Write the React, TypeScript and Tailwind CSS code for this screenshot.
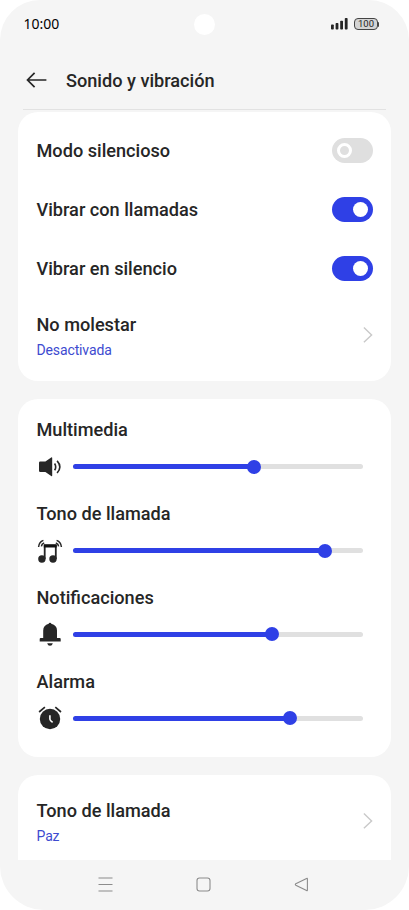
import type { ReactNode } from 'react';

type ToggleRowProps = {
  label: string;
  on: boolean;
};

type LinkRowProps = {
  label: string;
  value: string;
};

type SliderProps = {
  label: string;
  value: number;
  icon: ReactNode;
};

const SpeakerIcon = () => (
  <svg width="26" height="26" viewBox="0 0 26 26" fill="none">
    <path d="M3.2 7.6H8.4L14.2 3.4Q15.2 2.8 15.2 4V21.4Q15.2 22.6 14.2 22L8.4 18H3.2Q2 18 2 16.8V8.8Q2 7.6 3.2 7.6Z" fill="#262626" />
    <path d="M17.6 9.5Q19.8 12.9 17.6 16.3M20.1 6.9Q25.6 12.9 20.1 19" stroke="#262626" strokeWidth="1.6" />
  </svg>
);

const MusicIcon = () => (
  <svg width="26" height="26" viewBox="0 0 26 26" fill="none">
    <circle cx="4.9" cy="21" r="3.7" fill="#262626" />
    <circle cx="16" cy="21" r="3.7" fill="#262626" />
    <path d="M7.7 21V7.8H18.8V21" stroke="#262626" strokeWidth="1.8" />
    <path d="M6.8 6.2H19.7V9.5H6.8Z" fill="#111" />
    <path
      d="M1.6 9Q1.9 4 6.4 2.4M4.4 8.4Q4.6 5.9 7.2 4.9M24.4 9Q24.1 4 19.6 2.4M21.6 8.4Q21.4 5.9 18.8 4.9"
      stroke="#262626"
      strokeWidth="1.5"
    />
  </svg>
);

const BellIcon = () => (
  <svg width="26" height="26" viewBox="0 0 26 26" fill="#262626">
    <path d="M11.7 2.8Q11.8 1.7 13 1.7T14.3 2.8Q20 4.2 20 9.6V16.9H22.7Q23.7 16.9 23.7 17.9V20.5H2.7V17.9Q2.7 16.9 3.7 16.9H6.2V9.6Q6.2 4.2 11.7 2.8Z" />
    <path d="M10.2 22.3H15.8Q15.2 24.8 13 24.8T10.2 22.3Z" />
  </svg>
);

const AlarmIcon = () => (
  <svg width="26" height="26" viewBox="0 0 26 26" fill="none">
    <circle cx="13" cy="14" r="10.2" fill="#262626" />
    <path d="M2.1 7L7.9 2.2M18.3 2.2L24 7" stroke="#262626" strokeWidth="1.7" />
    <path d="M12.9 10.2V14.2Q13 15.4 15.6 17.4" stroke="#fff" strokeWidth="1.6" />
  </svg>
);

const Chevron = () => (
  <svg width="10" height="16" viewBox="0 0 10 16" fill="none" className="mb-[2px] shrink-0">
    <path d="M0.9 0.6L8.6 7.9L0.9 15.2" stroke="#c9c9c9" strokeWidth="1.4" />
  </svg>
);

const ToggleRow = ({ label, on }: ToggleRowProps) => (
  <div className="flex h-[59px] items-center justify-between">
    <p className="pt-px">{label}</p>
    <div
      className={
        on
          ? 'flex h-[25px] w-[41px] items-center justify-end rounded-full bg-[#2f40e6] px-[5px]'
          : 'flex h-[25px] w-[41px] items-center rounded-full bg-[#dfdfdf] px-[5px]'
      }
    >
      <span
        className={
          on
            ? 'size-[15px] rounded-full bg-white'
            : 'size-[15px] rounded-full border-[3px] border-white'
        }
      />
    </div>
  </div>
);

const LinkRow = ({ label, value }: LinkRowProps) => (
  <div className="flex items-center justify-between">
    <div>
      <p className="leading-7">{label}</p>
      <p className="text-[14px] leading-[22px] font-normal tracking-[-0.13px] text-[#3d4ad0]">{value}</p>
    </div>
    <Chevron />
  </div>
);

const VolumeSlider = ({ label, value, icon }: SliderProps) => (
  <div className="h-[83.85px]">
    <p className="leading-6">{label}</p>
    <div className="mt-[11.7px] flex h-[26px] items-center gap-[10px]">
      {icon}
      <div className="relative h-[4.6px] w-[290.5px] rounded-full bg-[#e0e0e0]">
        <div className="h-full rounded-full bg-[#2f40e6]" style={{ width: `${value}%` }} />
        <span
          className="absolute top-1/2 size-[14px] -translate-x-1/2 -translate-y-1/2 rounded-full bg-[#2f40e6]"
          style={{ left: `${value}%` }}
        />
      </div>
    </div>
  </div>
);

const App = () => {
  return (
    <div className="h-[910px] w-[409px] bg-white">
      <div className="flex h-full flex-col overflow-hidden rounded-t-[40px] rounded-b-[44px] bg-[#f5f5f5] font-['Roboto',sans-serif] text-[18.15px] font-medium text-[#262626]">
        <div className="grid h-12 grid-cols-3 items-center pr-[30px] pl-[23.5px]">
          <p className="pb-[2px] font-['Noto_Sans',sans-serif] text-[14px] font-normal text-black">10:00</p>
          <span className="ml-[52px] size-[21px] rounded-full bg-white" />
          <div className="flex items-center justify-end gap-[6px]">
            <svg width="17" height="12" viewBox="0 0 17 12" fill="#262626">
              <rect x="0" y="6.5" width="2.8" height="5" rx="0.8" />
              <rect x="4.6" y="5" width="2.8" height="6.5" rx="0.8" />
              <rect x="9.2" y="2.8" width="2.8" height="8.7" rx="0.8" />
              <rect x="13.8" y="0" width="2.8" height="11.5" rx="0.8" />
            </svg>
            <div className="flex items-center">
              <div className="flex h-3 w-6 items-center justify-center rounded-[4px] border border-[#444] bg-[#d4d4d4] text-[9.5px] leading-none font-normal">
                100
              </div>
              <span className="h-[5px] w-px rounded-r-sm bg-[#444]" />
            </div>
          </div>
        </div>

        <div className="mx-[23px] flex h-[62px] items-center gap-[19px] border-b border-[#e2e2e2] pt-[3px] pl-[3px]">
          <svg width="21" height="16" viewBox="0 0 21 16" fill="none" stroke="#262626" strokeWidth="1.7">
            <path d="M8.6 0.9L1.5 8L8.6 15.1M1.5 8H20.4" />
          </svg>
          <h1 className="pt-[2px]">Sonido y vibración</h1>
        </div>

        <div className="mx-[18px] mt-[2px] flex h-[748px] flex-col gap-[18px] overflow-hidden">
          <section className="h-[269px] shrink-0 rounded-[20px] bg-white pt-[9px] pr-[18px] pl-[18.5px]">
            <ToggleRow label="Modo silencioso" on={false} />
            <ToggleRow label="Vibrar con llamadas" on />
            <ToggleRow label="Vibrar en silencio" on />
            <div className="pt-[13px]">
              <LinkRow label="No molestar" value="Desactivada" />
            </div>
          </section>

          <section className="h-[358px] shrink-0 rounded-[20px] bg-white pt-[19px] pl-[18.5px]">
            <VolumeSlider label="Multimedia" value={62.4} icon={<SpeakerIcon />} />
            <VolumeSlider label="Tono de llamada" value={87} icon={<MusicIcon />} />
            <VolumeSlider label="Notificaciones" value={68.6} icon={<BellIcon />} />
            <VolumeSlider label="Alarma" value={74.7} icon={<AlarmIcon />} />
          </section>

          <section className="h-[85px] shrink-0 rounded-t-[20px] bg-white pt-[22px] pr-[18px] pl-[18.5px]">
            <LinkRow label="Tono de llamada" value="Paz" />
          </section>
        </div>

        <div className="flex h-[50px] items-center justify-center gap-[83px] pr-[2px] pb-px">
          <svg width="15" height="15" viewBox="0 0 15 15" stroke="#8c8c8c" strokeWidth="1.1">
            <path d="M0.5 1H14.5M0.5 7.5H14.5M0.5 14H14.5" />
          </svg>
          <svg width="15" height="15" viewBox="0 0 15 15" fill="none" stroke="#8c8c8c" strokeWidth="1.1">
            <rect x="1" y="1" width="13" height="13" rx="2.5" />
          </svg>
          <svg width="15" height="15" viewBox="0 0 15 15" fill="none" stroke="#8c8c8c" strokeWidth="1.1">
            <path d="M13.4 1.8V13.2Q13.4 14 12.6 13.6L1.8 8.2Q0.8 7.5 1.8 6.8L12.6 1.4Q13.4 1 13.4 1.8Z" />
          </svg>
        </div>
      </div>
    </div>
  );
};

export default App;
